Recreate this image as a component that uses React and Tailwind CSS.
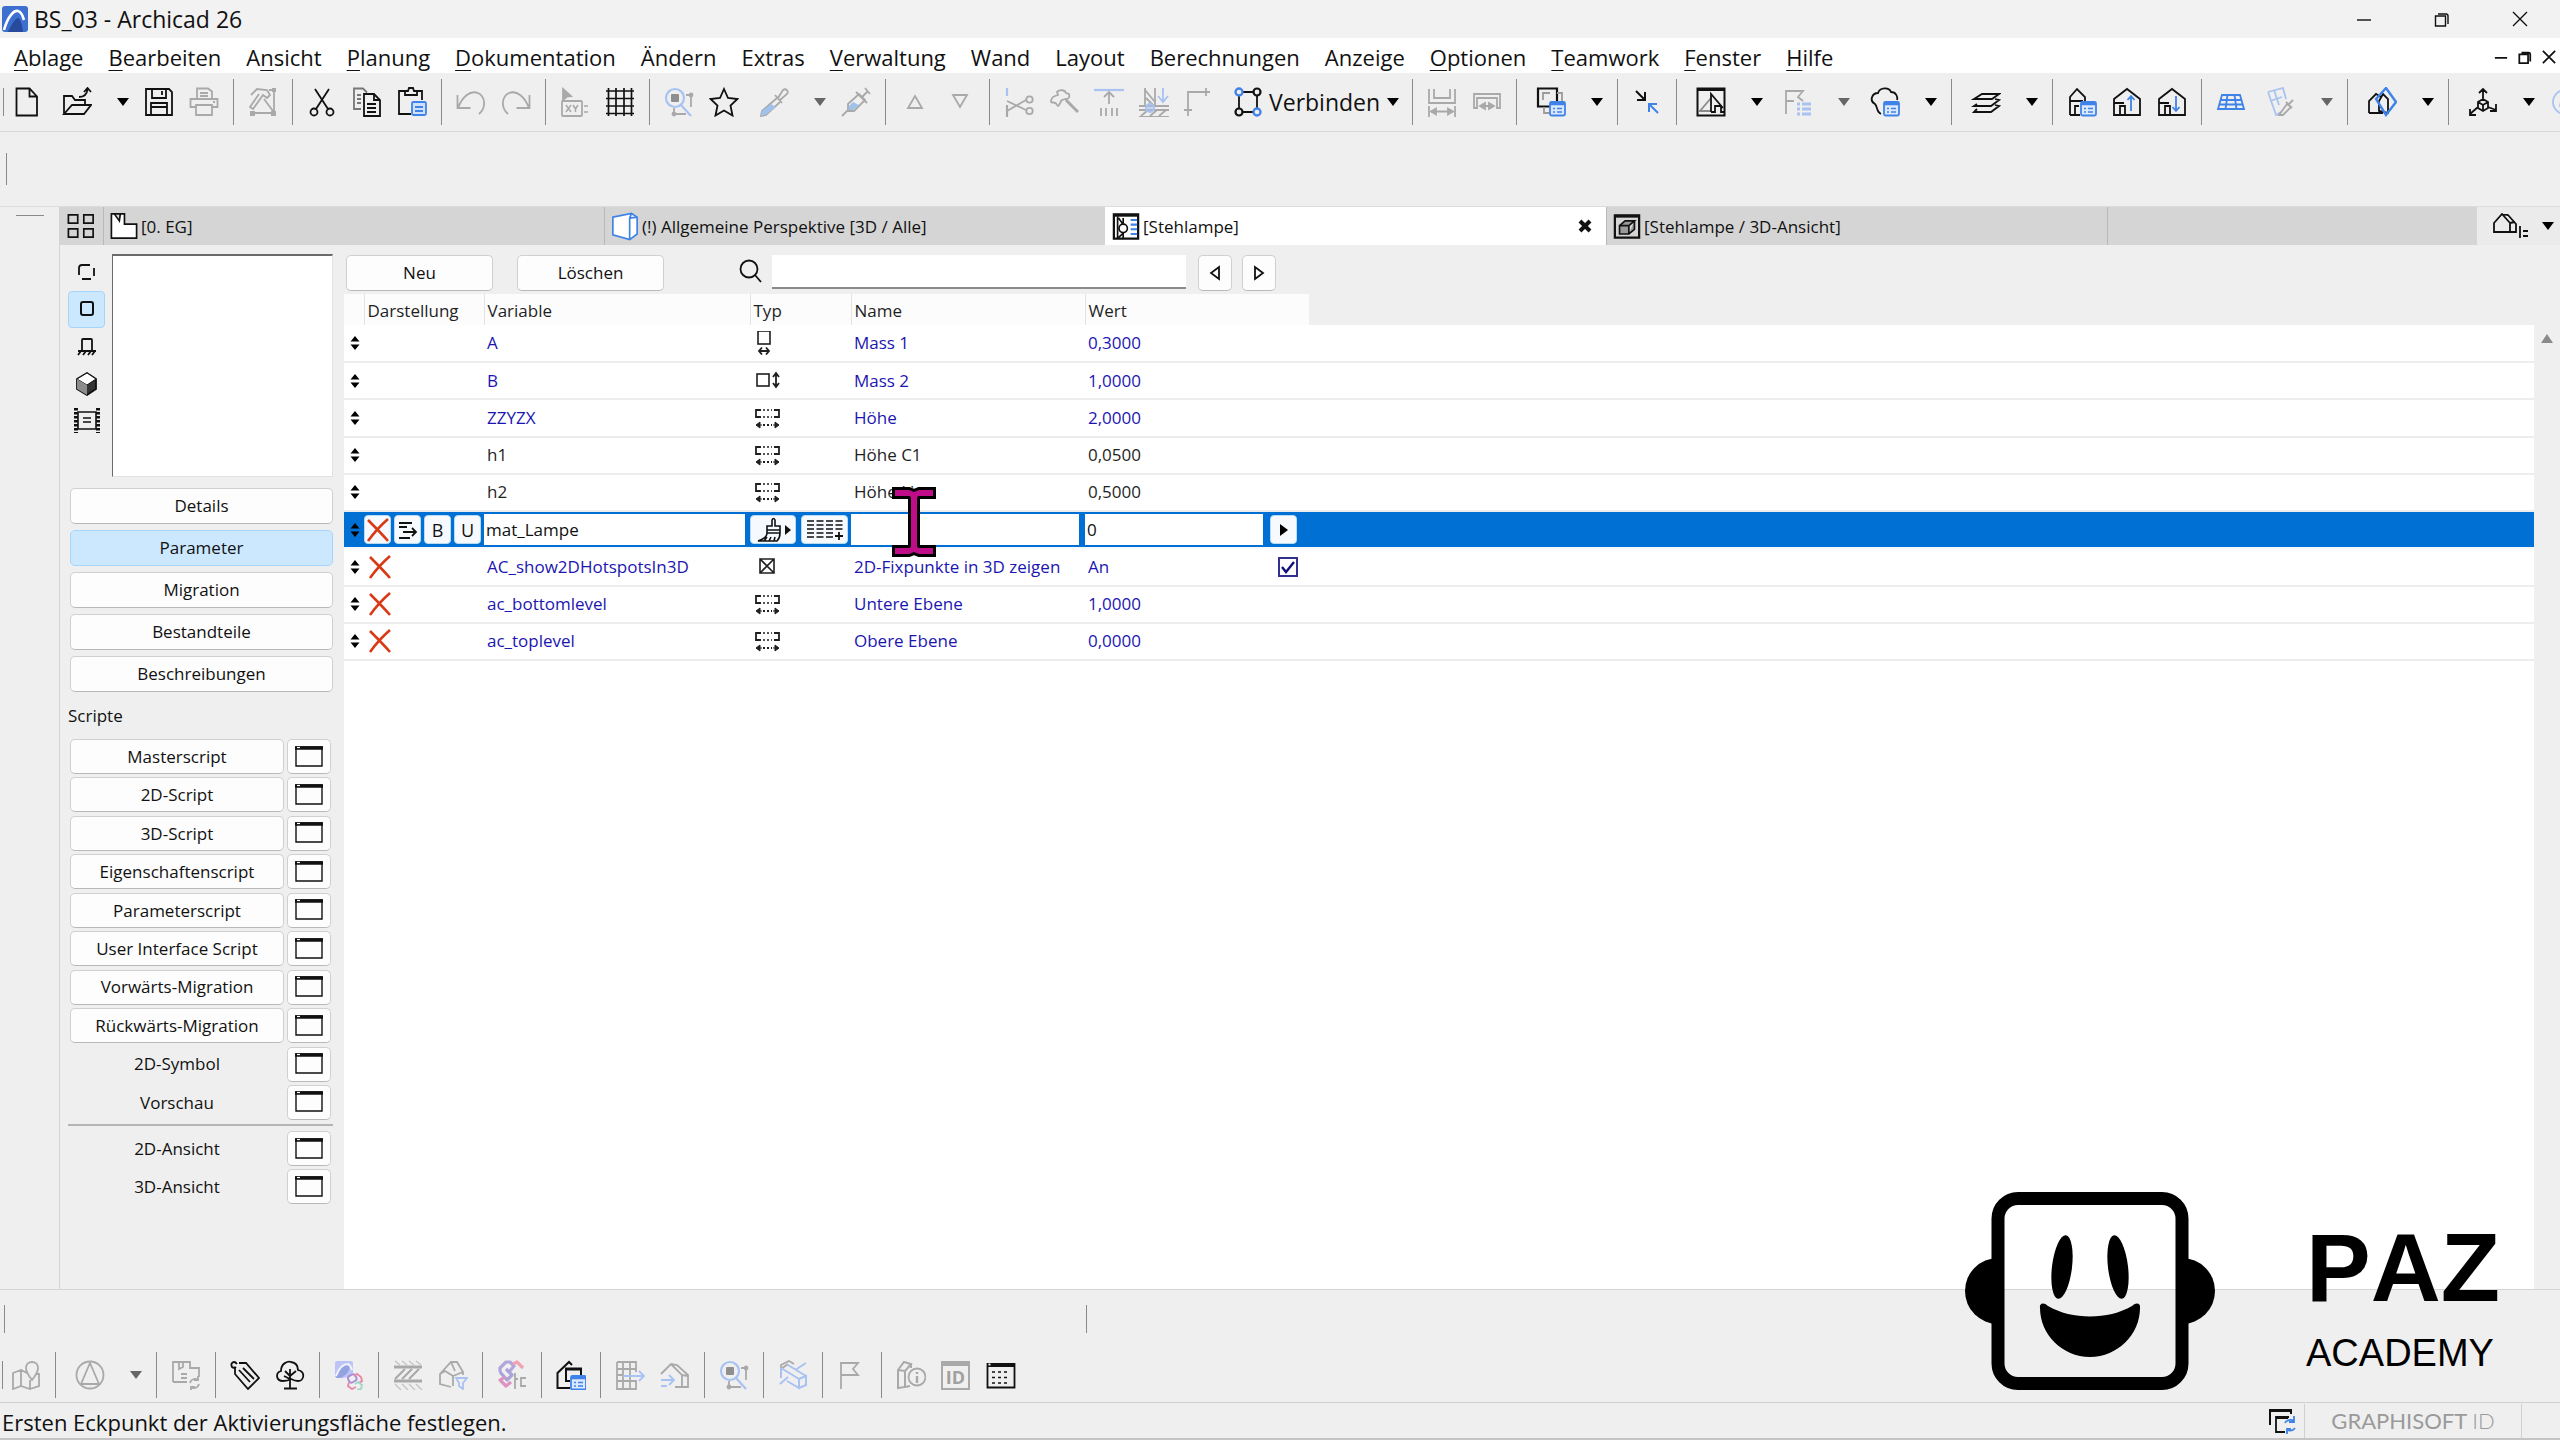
import { clsx } from 'clsx'

const GRAY = '#a9a9a9'
const BLUE = '#3f83e8'
const PALE = '#a8c2f2'

// All toolbar drawings share a 30 x 30 box
const Icon = ({ children, className = 'size-[30px]', box = '0 0 30 30' }) => (
  <svg viewBox={box} className={clsx('shrink-0', className)} fill='none' stroke='currentColor' strokeWidth='1.8' aria-hidden='true'>
    {children}
  </svg>
)

const Palette = ({ x = 14, y = 15 }) => (
  <g stroke={BLUE}>
    <rect x={x} y={y} width='15' height='13.500' rx='1.5' fill='#dbe8fd' />
    <path d={`M${x} ${y + 2}h15`} strokeWidth='2.500' />
    <path d={`M${x + 3} ${y + 6.5}h2M${x + 7} ${y + 6.5}h5M${x + 3} ${y + 10}h2M${x + 7} ${y + 10}h5`} strokeWidth='1.5' />
  </g>
)

const icons = {
  file: <path d='M4.500 1.500h13l7.500 8v19H4.500zM17.500 1.500v8H25' />,
  open: <path d='M2 27V9h8l3 4h10v5M2 27l8-9h19l-7 9zM17 10c5 0 8-2 8.500-8M22 5l3.500-4L29 5' />,
  save: <path d='M2 2h23l3 3v23H2zM8 2v9h14V2M18 4v4M7 28V16h16v12M7 20h16' />,
  print: <g stroke={GRAY}><path d='M8 12V1.500h11l4 3V12M11 6h8M11 9h8M7 20H1.500v-8h27v8H23' /><path d='M7 18h16v10H7z' /><path d='M24 15h2' /></g>,
  settings: <g stroke={GRAY}><path d='M3 8l6-6 10 1 3 5-3 3-4-3L5 22l-3-2L11 7M16 12l9 12M21 3h5v23H5' /><path d='M2 24h5v5H2zM23 24h5v5h-5zM24 1h4v4h-4z' fill={GRAY} stroke='none' /></g>,
  cut: <g><path d='M8 2l13 20M22 2L9 22' /><circle cx='7' cy='25' r='3.500' /><circle cx='23' cy='25' r='3.500' /></g>,
  copy: <g><path d='M9 22H2V1.500h9l4 4M5 8h4M5 12h4M5 16h4' stroke='#777' /><path d='M12 7h10l6 6v16H12zM22 7v6h6M15 17h9M15 21h9M15 25h9' /></g>,
  paste: <g><path d='M14 27H2V4h7M19 4h6v9M8 8h12V4h-3l-1-3h-4l-1 3H8z' /><rect x='15' y='15' width='14' height='13' rx='1.500' stroke={BLUE} fill='#cfe0fb' /><path d='M18 20h8M18 24h8' stroke={BLUE} /></g>,
  undo: <path d='M1.500 8v13h13M2 21C6 10 14 3 22 6c8 4 8 15 1 21' stroke={GRAY} />,
  redo: <path d='M28.500 8v13h-13M28 21C24 10 16 3 8 6 0 10 0 21 7 27' stroke={GRAY} />,
  xy: <g stroke={GRAY}><path d='M3 2l8 7-4 .5L3 13z' fill={GRAY} /><rect x='2' y='14' width='20' height='15' rx='1' /><path d='M6 18l5 7M11 18l-5 7M13 18l2.500 4 2.500-4M15.500 22v3M24 19h4M24 25h4' strokeWidth='1.500' /></g>,
  grid: <path d='M3.500 1v28M11 1v28M19 1v28M26.500 1v28M1 4h28M1 11.500h28M1 19h28M1 26.500h28' strokeWidth='1.700' />,
  find: <g><circle cx='11' cy='11' r='9' stroke={PALE} strokeWidth='2.200' /><path d='M17 18l10 11' stroke={PALE} strokeWidth='2.200' /><rect x='7' y='7' width='8' height='8' rx='1' fill='#8f8f8f' stroke='none' /><path d='M22 8h5v12M10 21v6h12' stroke={GRAY} /><circle cx='27' cy='8' r='1.500' fill={GRAY} stroke={GRAY} /><circle cx='10' cy='27' r='1.500' fill={GRAY} stroke={GRAY} /></g>,
  star: <path d='M15 2l4 9 9.500 1-7 6.500 2 10L15 23.500 6.500 28.500l2-10-7-6.500 9.500-1z' />,
  pipette: <g><path d='M18 11L3 24l-1 5 5-1 14-13' stroke={GRAY} /><path d='M12 17l5 3L6 28l-4 1 1-5z' fill='#9fc1ec' stroke='none' /><path d='M16 8l7 8M19 11l5-8c3-2 6 1 4 4l-7 6' stroke={GRAY} /></g>,
  syringe: <g><path d='M1 29l6-6M7 17l11-10 6 6-11 11H7z' stroke={GRAY} /><path d='M8 19l4-4 6 3-6 5H8z' fill='#9fc1ec' stroke='none' /><path d='M15 5l11 11M21 10l6-6M24 1l5 6' stroke={GRAY} /></g>,
  up: <path d='M15 9l7 12H8z' stroke={GRAY} />,
  down: <path d='M15 20L8 8h14z' stroke={GRAY} />,
  split: <g><path d='M3 1v8' stroke={PALE} strokeWidth='2.200' /><path d='M3 18v12' stroke={GRAY} strokeWidth='2.200' /><path d='M3 14l19 9M3 24l19-11' stroke={GRAY} /><circle cx='25.500' cy='12.500' r='3.200' stroke={GRAY} /><circle cx='25.500' cy='24' r='3.200' stroke={GRAY} /></g>,
  axe: <g stroke={GRAY}><path d='M2 15c0-3 1-5 4-6l3-1-1-3c3-3 8-2 9 1l3 1c1 3 0 5-3 5l-4 1c-2 2-2 5-4 6-2-1-1-3-3-3-1-1-3 0-4-1z' /><path d='M17 13l12 12' strokeWidth='3' /></g>,
  raise: <g><path d='M0 3h30' stroke={PALE} strokeWidth='2.200' /><path d='M15 17V6M10 10l5-5 5 5M7 21v8M12 21v8M18 21v8M23 21v8' stroke={GRAY} /></g>,
  trim: <g><path d='M6 1v19M16 1v19M6 3l10 12M7 11l9 9' stroke={GRAY} /><path d='M24 1v13M19 9l5 6 5-6' stroke={PALE} /><path d='M0 19h30M0 23h30M0 30h30M2 29l7-6M11 29l7-6M20 29l7-6' stroke={GRAY} /><circle cx='11' cy='21' r='4' fill={PALE} fillOpacity='.6' stroke={PALE} /></g>,
  corner: <g stroke={GRAY}><path d='M4 29V5h22M0 23h8M22 1v8' /></g>,
  connect: <g><path d='M9 5h12M6 9v12M24 9v12M9 25h12' /><circle cx='6' cy='5' r='3.500' stroke={BLUE} strokeWidth='2.300' /><circle cx='24' cy='5' r='3.500' strokeWidth='2.200' /><circle cx='6' cy='25' r='3.500' strokeWidth='2.200' /><circle cx='24' cy='25' r='3.500' stroke={BLUE} strokeWidth='2.300' /></g>,
  widthIn: <g stroke={GRAY}><path d='M2 2v14h26V2M7 2v9h16V2M2 19v11M28 19v11M4 24.500h22' /><path d='M4 24.500l5-3v6zM26 24.500l-5-3v6z' fill={GRAY} /></g>,
  widthOut: <g stroke={GRAY}><path d='M2 21V7h26v14h-3V11H5v10zM9 19h12' /><path d='M8 19l5-3v6zM22 19l-5-3v6z' fill={GRAY} /></g>,
  windows: <g><path d='M2 1.500h19v18H2z' strokeWidth='2.200' /><path d='M7 13V6h7M21 6h5v9M8 20v6h6' stroke='#9a9a9a' /><Palette /></g>,
  shrink: <g strokeWidth='2'><path d='M4 4l9 9M13 5v8H5' /><path d='M26 26l-9-9M17 25v-8h8' stroke={BLUE} /></g>,
  view: <g><path d='M1.500 1.500h27v27h-27z' strokeWidth='2' /><path d='M1.500 2.500h27' strokeWidth='3' /><path d='M3 24h11M4 24L15 11' stroke='#8a8a8a' /><path d='M15 25V7l12 14M15 25h4v-6h6v6h3' /></g>,
  flagList: <g><path d='M3 27V4h17l-5 6 5 4M3 14h8' stroke={GRAY} /><path d='M14 17h3M19 17h9M14 22h3M19 22h9M14 27h3M19 27h9' stroke={PALE} strokeWidth='2.800' /></g>,
  cloud: <g><path d='M11 27C6 25 8 20 5 17c-6-3-3-11 3-11C10 0 19 0 21 5c5 0 7 5 6 8' /><Palette /></g>,
  layers: <g><path d='M3 12l8-5h17l-7 5zM6 17l-3 2h17l8-6-4-1M6 22l-3 3h17l8-6-4-1' /></g>,
  houseList: <g><path d='M3 28V10l7-8 8 8v4M3 14h13M3 28h10M8 28v-9h4' /><Palette /></g>,
  houseUp: <g><path d='M2 12L15 2l13 10v16H2zM2 16h10M8 28V19h5v9' /><path d='M19 24V9M15.500 13L19 9l3.500 4' stroke={BLUE} /></g>,
  houseDown: <g><path d='M2 12L15 2l13 10v16H2zM2 16h10M8 28V19h5v9' /><path d='M19 9v15M15.500 20l3.500 4 3.500-4' stroke={BLUE} /></g>,
  plane: <path d='M6 8h18l4 14H2zM4.500 13h21M3.500 17.500h23M11.500 8l-2 14M18.500 8l2 14' stroke={BLUE} />,
  surface: <g><path d='M2 5l15-4 3 11M2 5l8 23 5-3M4 14l12-4M8 3l5 15' stroke={PALE} /><path d='M13 28l8-11 4 3-8 8zM20 15l6 6M23 17l4-4' stroke={GRAY} /></g>,
  section: <g><path d='M2 26V14l7-7 5 3M2 26h14M12 14v10l9 2V12l-5-5z' /><path d='M9 12L19 1l10 14-10 13z' stroke={BLUE} strokeWidth='2.400' /></g>,
  orbit: <g><path d='M15 12V2M11 6l4-4 4 4M10 20l-8 7M2 22v6h6M20 20l8 3M28 17v7h-6M10 15l5-3 5 3v6l-5 3-5-3zM10 15l5 3 5-3M15 18v6' /></g>,
  orbitMore: <g stroke={PALE}><circle cx='15' cy='15' r='12' /><path d='M10 20c0-8 6-10 12-8' /></g>,

  map: <path d='M2 13l8-3v16l-8 3zM10 10l6 3M10 26l9 3V20M19 29l9-3V14h-3M21 20c-4-5-6-8-6-12 0-8 12-8 12 0 0 4-2 7-6 12zM21 9v.1' stroke={GRAY} />,
  north: <g stroke={GRAY}><circle cx='15' cy='15' r='13.500' /><path d='M15 3l9 21H6z' /></g>,
  zoneSync: <path d='M2 22V2h17v6h9v9M2 22h14M8 2v7l4-2V2M10 14h6M10 18h6M19 23c1-4 5-5 8-3M27 16v4h-4M28 24c-1 4-5 5-8 3M20 31v-4h4' stroke={GRAY} />,
  tag: <path d='M7 4c-3-4-7-1-5 3 1 1 3 1 4 0M9 3h7l13 15-11 11L5 14V8M9 10l11 12M13 8l11 11' />,
  tree: <path d='M8 21C1 21 0 13 6 11 6 3 13 1 16 2c6 1 7 5 7 8 8 2 6 11 0 11-3 0-5-1-7-2-3 2-5 2-8 2zM15 28V9M15 16l-5-5M15 16l6-5M15 19l-6-3M9 28.500h13' />,
  convert: <g><path d='M1 3q0-2 2-2h14q2 0 2 2v10q-9 8-18 4z' fill='#bcc4f6' stroke='none' /><path d='M2 18C5 8 10 3 14 3c3 4 2 8-4 13-3 2-6 2-8 2z' fill='#93a3e2' stroke='none' /><path d='M2 16C5 8 9 4 14 4c2 1 3 3 4 6' stroke='#f1f2fc' strokeWidth='2' /><g strokeWidth='1.900'><rect x='14' y='15' width='8' height='7' rx='2.500' transform='rotate(-30 18 18)' stroke='#a78fd6' /><path d='M20 16l3-2 4 3 1 4-3 2' stroke='#e889ab' /><path d='M15 22l-1 4 4 3 4-2' stroke='#e889ab' /><path d='M21 24l3-2 4 3-1 4-4 1' stroke='#a5d5c9' /></g></g>,
  hatch: <g stroke={GRAY}><path d='M1 7h28M1 21h28' strokeWidth='3' /><path d='M2 19L12 9M9 19L19 9M16 19L26 9' strokeWidth='2.200' /><path d='M2 1l5 4M9 1l5 4M16 1l5 4M23 1l5 4M2 24l6 6M9 24l6 6M16 24l6 6M23 24l6 6' stroke='#c4c4c4' strokeWidth='1.400' /></g>,
  houseFilter: <g><path d='M13 27L2 24V14L13 2h6l6 10v3M2 14l5-3 8 5v10M15 16l10-4M13 2l4 9' stroke={GRAY} /><path d='M18 18h11l-4 5v6l-4-3v-3z' stroke={PALE} /></g>,
  issue: <g strokeWidth='3.200' strokeLinejoin='round'><path d='M3 12V8l6-6h4l4 4-5 6' stroke='#b3a5dc' /><path d='M16 4l4-2 6 6' stroke='#f0a3b4' /><path d='M3 12l7 8 5-5-6-6' stroke='#a9a3d8' /><path d='M8 17l-5 3 6 6 5-4' stroke='#dd93c0' /><path d='M18 13v16M18 19h3M24 17v10M24 18h5M24 26h5' stroke={GRAY} strokeWidth='1.800' /></g>,
  homePalette: <g><path d='M14 28H1.500V13L13 2l3 3' strokeWidth='2' /><path d='M14 21h-4V9h15v6' strokeWidth='2' /><path d='M9 9h17' strokeWidth='3' /><Palette x={15} y={16} /></g>,
  gridMove: <g><path d='M2 2h19v10M21 20v9H2V2M8 2v27M15 2v27M2 9h19M2 21h19M2 15h6' stroke={GRAY} /><path d='M8 16h21M24 11l5 5-5 5' stroke={PALE} /></g>,
  houseMove: <g><path d='M1 14L11 4l11 11v11M11 4l6 1 11 10v12H15M22 15l6 1' stroke={GRAY} /><path d='M1 20h12M9 15l5 5-5 5M1 26h6' stroke={PALE} /></g>,
  beam: <g><path d='M3 8V5l8-4 5 3M3 9l7-5' stroke={GRAY} /><path d='M3 8l18 11v9L9 21M3 8v10M21 19l7-3v9l-7 3M10 5l18 11M2 24l8-7M17 10L28 3' stroke={PALE} strokeWidth='2' /></g>,
  flag: <path d='M4 29V3h17l-5 6 5 6H4' stroke={GRAY} />,
  elementInfo: <g stroke={GRAY}><path d='M2 10l6-8 7 2-6 7v16l-7 1zM9 11l-7-1M15 4v4M9 27l5-1' strokeWidth='2' /><circle cx='21' cy='17' r='8.500' /><path d='M21 12v2M21 16v7' strokeWidth='2.400' /></g>,
  listWindow: <g><path d='M1.500 4v23.500h27V4z' /><path d='M1 5h28' strokeWidth='4' /><path d='M2.500 4.500h2' stroke='#fff' /><path d='M6 12h3M12 12h3M18 12h3M6 17.500h3M12 17.500h3M18 17.500h3M6 23h3M12 23h3M18 23h3' strokeWidth='1.600' /></g>,
}

const Caret = ({ faded }) => (
  <svg viewBox='0 0 12 8' className={clsx('w-3 h-2', faded ? 'fill-[#666]' : 'fill-black')} aria-hidden='true'>
    <path d='M0 0h12L6 8z' />
  </svg>
)

const Separator = () => (
  <div className='w-3.5 shrink-0 flex justify-center'>
    <div className='w-px h-[46px] bg-[#8a8a8a]' />
  </div>
)

const Tool = ({ name, menu, faded, children }) => {
  if (menu) {
    return (
      <div className='w-[87px] shrink-0 flex items-center'>
        <button aria-label={name} className='w-[55px] flex justify-center'>
          <Icon>{icons[name]}</Icon>
        </button>
        <button aria-label={`${name} menu`} className='w-8 h-[30px] pr-[7px] flex items-center justify-end'>
          <Caret faded={faded} />
        </button>
      </div>
    )
  }
  return (
    <button aria-label={name} className='w-[45px] shrink-0 flex justify-center'>
      {children || <Icon>{icons[name]}</Icon>}
    </button>
  )
}

// '|' is a divider, a ':v' suffix adds a drop-down, ':f' a faded one
const Toolbar = ({ items }) =>
  items.map((item, idx) => {
    if (item === '|') return <Separator key={idx} />
    if (item === 'connect') {
      return (
        <button key={idx} className='w-[184px] shrink-0 pl-3 flex items-center'>
          <Icon className='size-[30px]'>{icons.connect}</Icon>
          <span className='pl-1.5 grow text-left text-[23px] leading-7'>Verbinden</span>
          <span className='pr-1.5'><Caret /></span>
        </button>
      )
    }
    if (item === 'id') {
      return (
        <Tool key={idx} name='id'>
          <span className='size-[29px] border-2 border-t-[5px] border-[#a9a9a9] text-[#a0a0a0] text-[18px] leading-[22px] font-bold'>ID</span>
        </Tool>
      )
    }
    const [name, mode] = item.split(':')
    return <Tool key={idx} name={name} menu={Boolean(mode)} faded={mode === 'f'} />
  })

const topTools = [
  'file', 'open:v', 'save', 'print', '|', 'settings', '|', 'cut', 'copy', 'paste', '|', 'undo', 'redo', '|', 'xy', 'grid', '|',
  'find', 'star', 'pipette:f', 'syringe', '|', 'up', 'down', '|', 'split', 'axe', 'raise', 'trim', 'corner', 'connect', '|',
  'widthIn', 'widthOut', '|', 'windows:v', '|', 'shrink', '|', 'view:v', 'flagList:f', 'cloud:v', '|', 'layers:v', '|',
  'houseList', 'houseUp', 'houseDown', '|', 'plane', 'surface:f', '|', 'section:v', '|', 'orbit:v', 'orbitMore',
]

const bottomTools = [
  'map', '|', 'north:f', '|', 'zoneSync', '|', 'tag', 'tree', '|', 'convert', '|', 'hatch', 'houseFilter', '|', 'issue', '|',
  'homePalette', '|', 'gridMove', 'houseMove', '|', 'find', '|', 'beam', '|', 'flag', '|', 'elementInfo', 'id', 'listWindow',
]

// [text before, underlined letter, rest]
const menus = [
  ['', 'A', 'blage'], ['', 'B', 'earbeiten'], ['A', 'n', 'sicht'], ['', 'P', 'lanung'], ['', 'D', 'okumentation'],
  ['Ändern'], ['Extras'], ['', 'V', 'erwaltung'], ['Wand'], ['Layout'], ['Berechnungen'], ['Anzeige'],
  ['', 'O', 'ptionen'], ['', 'T', 'eamwork'], ['', 'F', 'enster'], ['', 'H', 'ilfe'],
]

const WindowControls = ({ small }) => (
  <div className={clsx('flex items-center ml-auto', small ? 'gap-2.5 pr-1' : 'gap-[62px] pr-8')}>
    {['M1 9h14', 'M1.500 5h10v10h-10zM4 3h8q2 0 2 2v8', 'M1 1l14 14M15 1L1 15'].map((d, idx) => (
      <button key={d} aria-label={['Minimieren', 'Wiederherstellen', 'Schliessen'][idx]}>
        <Icon box='0 0 16 16' className={small ? 'size-3.5' : 'size-4'}>
          <path d={d} strokeWidth={small ? 2 : 1.4} />
        </Icon>
      </button>
    ))}
  </div>
)

const tabs = [
  {
    label: '[0. EG]',
    icon: <path d='M1.500 1.500h14v11h13v15h-27z M5 2l5 7 1-7' fill='#fff' />,
  },
  {
    label: '(!) Allgemeine Perspektive [3D / Alle]',
    icon: <path d='M2 5l20-4 6 4v18l-8 6-18-5zM20 6v23M22 1l-2 5M20 6l8-1' fill='#fff' stroke={BLUE} />,
  },
  {
    label: '[Stehlampe]',
    active: true,
    icon: <g><path d='M2 2h26v26H2z' strokeWidth='2.400' /><path d='M2 3h26' strokeWidth='3' /><path d='M6 4v24M12 6v7M12 22v6M7 6l5 7M7 27l5-5' /><circle cx='12' cy='17' r='4.500' /><path d='M20 8h7M20 13h7M20 18h7M20 23h7' stroke={BLUE} strokeWidth='2.200' /></g>,
  },
  {
    label: '[Stehlampe / 3D-Ansicht]',
    icon: <g><path d='M2 3h26v24H2z' strokeWidth='2.400' /><path d='M2 4h26' strokeWidth='3' /><path d='M7 14h10v9H7zM7 14l6-5h10l-6 5M23 9v9l-6 5' fill='#9a9a9a' /></g>,
  },
]

const raised = 'rounded-[5px] border border-[#d0d0d0] border-b-[#b9b9b9] bg-[#fdfdfd]'

const sections = ['Details', 'Parameter', 'Migration', 'Bestandteile', 'Beschreibungen']

const scripts = [
  { name: 'Masterscript' }, { name: '2D-Script' }, { name: '3D-Script' }, { name: 'Eigenschaftenscript' },
  { name: 'Parameterscript' }, { name: 'User Interface Script' }, { name: 'Vorwärts-Migration' },
  { name: 'Rückwärts-Migration' }, { name: '2D-Symbol', plain: true }, { name: 'Vorschau', plain: true },
]

const views = [{ name: '2D-Ansicht', plain: true }, { name: '3D-Ansicht', plain: true }]

const previewModes = [
  { name: '2D-Symbol', icon: <path d='M5 15V8q0-3 3-3h8M20 8v8M8 19h9' strokeWidth='1.800' /> },
  { name: 'Vollansicht', icon: <rect x='7' y='5' width='12' height='13' rx='2' strokeWidth='2' />, selected: true },
  { name: 'Ansicht', icon: <path d='M8 16V6q0-1 1-1h8q1 0 1 1v10M4 17h18M7 17l-3 4M12 17l-3 4M17 17l-3 4M21 17l-3 4' strokeWidth='1.800' /> },
  { name: '3D', icon: <g><path d='M3 8l10-6 9 6v10l-9 6-10-6z' fill='#333' /><path d='M3 8l10-6 9 6-9 6z' fill='#fff' strokeWidth='1' /><path d='M3 8l10 6v10L3 18z' fill='#8c8c8c' stroke='none' /></g> },
  { name: 'Vorschaubild', icon: <g><path d='M2 0v25M24 0v25' strokeWidth='4' strokeDasharray='2.500 1.500' /><path d='M4 4h18v17H4zM9 10h8M9 14h8' strokeWidth='1.600' /></g> },
]

const ScriptRow = ({ name, plain }) => (
  <div className='flex gap-[3px]'>
    {plain ? (
      <div className='w-[214px] h-[35px] flex items-center justify-center'>{name}</div>
    ) : (
      <button className={clsx('w-[214px] h-[35px]', raised)}>{name}</button>
    )}
    <button aria-label={`${name} Fenster`} className={clsx('w-11 h-[35px] flex items-center justify-center', raised)}>
      <Icon box='0 0 28 22' className='w-7 h-[22px]'>
        <path d='M1 1h26v19H1z' strokeWidth='1.400' />
        <path d='M0 2h28' strokeWidth='3.500' />
        <path d='M2 1.500h3' stroke='#fff' strokeWidth='1.200' />
      </Icon>
    </button>
  </div>
)

const SidePanel = () => (
  <aside className='w-[285px] shrink-0 border-l border-[#d4d4d4] pl-2 pr-[11px] pt-[9px] text-[17px]'>
    <div className='flex gap-[7px]'>
      <div className='flex flex-col'>
        {previewModes.map(({ name, icon, selected }) => (
          <button
            key={name}
            aria-label={name}
            className={clsx('w-[37px] h-[37px] flex items-center justify-center rounded border', selected ? 'bg-[#cce8ff] border-[#a5d5fa]' : 'border-transparent')}
          >
            <Icon box='0 0 26 25' className='w-[26px] h-[25px]'>{icon}</Icon>
          </button>
        ))}
      </div>
      <div className='grow h-[223px] bg-white border border-t-2 border-[#6b6b6b] border-r-[#e2e2e2] border-b-[#e2e2e2]' />
    </div>
    <div className='mt-[11px] pl-0.5 flex flex-col gap-1.5'>
      {sections.map(name => (
        <button
          key={name}
          className={clsx('h-9', name === 'Parameter' ? 'rounded-[5px] border border-[#a5d5fa] bg-[#cce8ff]' : raised)}
        >
          {name}
        </button>
      ))}
    </div>
    <h2 className='h-[47px] flex items-center'>Scripte</h2>
    <div className='pl-0.5 min-h-[381px] flex flex-col justify-between'>
      {scripts.map(item => <ScriptRow key={item.name} {...item} />)}
    </div>
    <div className='mt-1 mb-[5px] h-0.5 bg-[#b5b5b5]' />
    <div className='pl-0.5 flex flex-col gap-[3px]'>
      {views.map(item => <ScriptRow key={item.name} {...item} />)}
    </div>
  </aside>
)

const typeIcons = {
  width: <g><rect x='4' y='0' width='12' height='13' strokeWidth='1.600' /><path d='M5 20h10M8 16.500L5 20l3 3.500M12 16.500l3 3.500-3 3.500' strokeWidth='1.800' /></g>,
  depth: <g><rect x='3' y='5' width='12' height='12' strokeWidth='1.600' /><path d='M22 5v12M19 8l3-4 3 4M19 14l3 4 3-4' strokeWidth='1.800' /></g>,
  length: <g><path d='M7 4H2v7h5M20 4h5v7h-5' strokeWidth='1.800' /><path d='M9 4h9M9 11h9' strokeDasharray='2 2' strokeWidth='1.600' /><path d='M9 19h9' strokeDasharray='2 2' /><path d='M2 19l4-3v6zM25 19l-4-3v6zM5 19h3M19 19h3' fill='currentColor' strokeWidth='1' /></g>,
  bool: <path d='M6 4h14v14H6zM6 4l14 14M20 4L6 18' strokeWidth='1.600' />,
}

const rows = [
  { variable: 'A', type: 'width', name: 'Mass 1', value: '0,3000', fixed: true },
  { variable: 'B', type: 'depth', name: 'Mass 2', value: '1,0000', fixed: true },
  { variable: 'ZZYZX', type: 'length', name: 'Höhe', value: '2,0000', fixed: true },
  { variable: 'h1', type: 'length', name: 'Höhe C1', value: '0,0500' },
  { variable: 'h2', type: 'length', name: 'Höhe Line', value: '0,5000' },
  { variable: 'mat_Lampe', editing: true },
  { variable: 'AC_show2DHotspotsIn3D', type: 'bool', name: '2D-Fixpunkte in 3D zeigen', value: 'An', fixed: true, hidden: true },
  { variable: 'ac_bottomlevel', type: 'length', name: 'Untere Ebene', value: '1,0000', fixed: true, hidden: true },
  { variable: 'ac_toplevel', type: 'length', name: 'Obere Ebene', value: '0,0000', fixed: true, hidden: true },
]

const SortHandle = () => (
  <svg viewBox='0 0 10 14' className='ml-1.5 w-2.5 h-3.5 fill-black' aria-hidden='true'>
    <path d='M5 0l4.500 5.500h-9zM5 14l4.500-5.500h-9z' />
  </svg>
)

const RedCross = () => (
  <Icon box='0 0 24 24' className='size-6'>
    <path d='M2 2c6 6 14 14 20 21M22 1C14 8 7 16 2 23' stroke='#d93a16' strokeWidth='2.600' />
  </Icon>
)

const cellButton = 'h-[29px] shrink-0 flex items-center justify-center rounded-sm border border-[#b8dcf7] bg-[#f6fafe]'
const cellInput = 'h-[31px] pl-0.5 bg-white outline-none'

const EditingRow = ({ variable }) => (
  <tr className='h-[37px] bg-[#0070d4] border-b-2 border-[#f4f9fe]'>
    <td><SortHandle /></td>
    <td>
      <div className='flex gap-[3px]'>
        <button aria-label='Ausblenden' className={clsx('w-[27px]', cellButton)}><RedCross /></button>
        <button aria-label='Einrücken' className={clsx('w-[27px]', cellButton)}>
          <Icon box='0 0 20 20' className='size-5'><path d='M1 3h13M1 7h8M5 12h13M14 8l4 4-4 4M1 18h11' /></Icon>
        </button>
        <button className={clsx('w-[27px] text-[18px]', cellButton)}>B</button>
        <button className={clsx('w-[27px] text-[18px]', cellButton)}>U</button>
      </div>
    </td>
    <td><input aria-label='Variable' defaultValue={variable} className={clsx('block w-[261px]', cellInput)} /></td>
    <td>
      <div className='flex gap-[5px]'>
        <button aria-label='Materialtyp' className={clsx('w-[46px]', cellButton)}>
          <Icon box='0 0 38 26' className='w-[38px] h-[26px]'>
            <path d='M18 9V3q1.500-3 3 0v6h5v7H13V9zM13 13h13M13 16c0 4-3 6-9 8h19c2-2 3-5 3-8M10 24l3-4M15 24l2-4M20 24l1-4' strokeWidth='1.600' />
            <path d='M31 8l6 5-6 5z' fill='currentColor' stroke='none' />
          </Icon>
        </button>
        <button aria-label='Array' className={clsx('w-[47px]', cellButton)}>
          <Icon box='0 0 38 24' className='w-[38px] h-6'>
            <path d='M1 3h36M1 7h36M1 11h36M1 15h28M1 19h26' strokeDasharray='7 2.500' strokeWidth='1.500' />
            <path d='M29 18h8M33 14v8' />
          </Icon>
        </button>
      </div>
    </td>
    <td><input aria-label='Name' defaultValue='' className={clsx('block w-[228px]', cellInput)} /></td>
    <td>
      <div className='flex items-center justify-between pr-3'>
        <input aria-label='Wert' defaultValue='0' className={clsx('w-[178px]', cellInput)} />
        <button aria-label='Auswahl' className={clsx('w-[27px]', cellButton)}>
          <svg viewBox='0 0 8 12' className='w-2 h-3 fill-black' aria-hidden='true'><path d='M0 0l8 6-8 6z' /></svg>
        </button>
      </div>
    </td>
    <td />
  </tr>
)

const ParameterRow = ({ variable, type, name, value, fixed, hidden }) => (
  <tr className={clsx('h-[37px] bg-white border-b-2 border-[#ededed]', fixed ? 'text-[#1c16b0]' : 'text-[#1f1f1f]')}>
    <td><SortHandle /></td>
    <td className='pl-1'>{hidden && <RedCross />}</td>
    <td className='pl-[3px]'>{variable}</td>
    <td className='pl-1 text-[#1f1f1f]'>
      <Icon box='0 0 26 24' className='w-[26px] h-6'>{typeIcons[type]}</Icon>
    </td>
    <td className='pl-[3px]'>{name}</td>
    <td className='pl-[3px]'>
      {type === 'bool' ? (
        <label className='flex items-center justify-between pr-[11px]'>
          {value}
          <span className='grid place-items-center'>
            <input type='checkbox' defaultChecked className='appearance-none size-5 border-2 border-[#33318f] bg-white col-start-1 row-start-1' />
            <Icon box='0 0 20 20' className='size-5 col-start-1 row-start-1 text-[#12107a] pointer-events-none'>
              <path d='M4 10l4 5 8-10' strokeWidth='2.400' />
            </Icon>
          </span>
        </label>
      ) : value}
    </td>
    <td />
  </tr>
)

const ParameterTable = () => (
  <table className='w-full h-[367px] table-fixed border-collapse text-[17px] leading-5'>
    <colgroup>
      <col className='w-5' />
      <col className='w-[120px]' />
      <col className='w-[266px]' />
      <col className='w-[101px]' />
      <col className='w-[234px]' />
      <col className='w-[224px]' />
      <col />
    </colgroup>
    <thead>
      <tr className='h-[31px] text-left text-[#1f1f1f] *:font-normal *:pl-[3px] *:pt-0.5'>
        <th className='bg-[#fcfcfc]' />
        <th className='bg-[#fcfcfc] border-l border-[#e3e3e3]'>Darstellung</th>
        <th className='bg-[#fcfcfc] border-l border-[#e3e3e3]'>Variable</th>
        <th className='bg-[#fcfcfc] border-l border-[#e3e3e3]'>Typ</th>
        <th className='bg-[#fcfcfc] border-l border-[#e3e3e3]'>Name</th>
        <th className='bg-[#fcfcfc] border-l border-[#e3e3e3]'>Wert</th>
        <th className='bg-[#efefef]' />
      </tr>
    </thead>
    <tbody>
      {rows.map(row => row.editing
        ? <EditingRow key={row.variable} {...row} />
        : <ParameterRow key={row.variable} {...row} />)}
    </tbody>
  </table>
)

const EditorPanel = () => (
  <main className='relative grow min-w-0 flex flex-col'>
    <div className='h-[49px] pl-0.5 pt-2.5 flex items-start text-[17px]'>
      <button className={clsx('w-[147px] h-9 mr-6', raised)}>Neu</button>
      <button className={clsx('w-[147px] h-9', raised)}>Löschen</button>
      <label htmlFor='search' aria-label='Suchen' className='ml-[74px] mr-2.5 pt-1'>
        <Icon box='0 0 24 24' className='size-6'>
          <circle cx='11' cy='10' r='8.500' />
          <path d='M17 16l6 7' />
        </Icon>
      </label>
      <input id='search' className='w-[414px] h-[34px] bg-white border-b-2 border-[#8a8a8a] outline-none' />
      <button aria-label='Zurück' className={clsx('ml-3 w-[34px] h-9 flex items-center justify-center', raised)}>
        <Icon box='0 0 12 16' className='w-3 h-4'><path d='M10 2v12L2 8z' /></Icon>
      </button>
      <button aria-label='Weiter' className={clsx('ml-2.5 w-[34px] h-9 flex items-center justify-center', raised)}>
        <Icon box='0 0 12 16' className='w-3 h-4'><path d='M2 2v12l8-6z' /></Icon>
      </button>
    </div>
    <div className='grow flex'>
      <div className='grow min-w-0 bg-white'>
        <ParameterTable />
      </div>
      <div className='w-[26px] shrink-0 pt-10 flex justify-center'>
        <svg viewBox='0 0 12 9' className='w-3 h-[9px] fill-[#8a8a8a]' aria-hidden='true'><path d='M6 0l6 9H0z' /></svg>
      </div>
    </div>
    {/* I-beam pointer */}
    <svg viewBox='0 0 44 72' className='absolute left-[548px] top-[241px] w-11 h-[72px]' aria-hidden='true'>
      <path d='M3 4h14l5 2 5-2h14v6H27q-2 0-2 3v46q0 3 2 3h14v6H27l-5-2-5 2H3v-6h14q2 0 2-3V13q0-3-2-3H3z' fill='#bf0d8a' stroke='#000' strokeWidth='6' paintOrder='stroke' />
    </svg>
  </main>
)

const Brand = () => (
  <div className='absolute right-[60px] bottom-[50px] flex items-start gap-[90px]'>
    <svg viewBox='0 0 252 198' className='w-[252px] h-[198px]' aria-hidden='true'>
      <circle cx='34' cy='99' r='33' />
      <circle cx='218' cy='99' r='33' />
      <rect x='40' y='12' width='172' height='174' rx='14' fill='#fff' />
      <path d='M40 98h172v74q0 14-14 14H54q-14 0-14-14z' fill='#efefef' />
      <path d='M40 97.500h172' stroke='#d4d4d4' />
      <rect x='34' y='6.500' width='184' height='185' rx='20' fill='none' stroke='#000' strokeWidth='13' />
      <ellipse cx='98' cy='75' rx='10' ry='32' transform='rotate(7 98 75)' />
      <ellipse cx='154' cy='75' rx='10' ry='32' transform='rotate(-7 154 75)' />
      <path d='M76 116c-1-5 4-6 8-2 24 14 60 14 84 0 4-4 9-3 8 2 0 26-22 49-50 49s-50-23-50-49z' />
    </svg>
    <div className='pt-[27px] font-["Liberation_Sans",sans-serif] text-black'>
      <div className='text-[97px] leading-none font-bold [font-kerning:none]'>PAZ</div>
      <div className='mt-[18px] text-[38px] leading-none'>ACADEMY</div>
    </div>
  </div>
)

export default function App() {
  return (
    <div className='relative min-h-screen flex flex-col overflow-hidden bg-[#efefef] text-[#111] font-["Open_Sans","Noto_Sans",sans-serif]'>
      <header className='h-[38px] flex items-center bg-[#f2f2f2] pl-0.5'>
        <svg viewBox='0 0 26 26' className='size-[26px] mr-1.5' aria-hidden='true'>
          <rect width='26' height='26' rx='3' fill='#3d6fd0' />
          <path d='M2 24C6 10 12 4 16 5s5 6 6 9' fill='none' stroke='#fff' strokeWidth='2.600' />
          <path d='M6 26c4-9 8-14 10-14s4 6 5 14z' fill='#274a9c' />
        </svg>
        <h1 className='text-[23px] leading-7'>BS_03 - Archicad 26</h1>
        <WindowControls />
      </header>

      <nav className='h-[35px] flex items-center gap-[25px] bg-white pl-3.5 pt-0.5 text-[22px] leading-7'>
        {menus.map(([before, key, after]) => (
          <a key={before + key + after} href='#menu'>
            {before}
            {key && <span className='underline underline-offset-4 decoration-1'>{key}</span>}
            {after}
          </a>
        ))}
        <WindowControls small />
      </nav>

      <div className='h-[59px] flex items-center overflow-hidden border-b border-[#d6d6d6]'>
        <div className='w-1 shrink-0 flex justify-end'><div className='w-px h-7 bg-[#8a8a8a]' /></div>
        <Toolbar items={topTools} />
      </div>
      <div className='h-[75px] pl-1.5 flex items-center border-b border-[#dcdcdc]'>
        <div className='w-px h-8 bg-[#8a8a8a]' />
      </div>

      <div className='grow flex'>
        <div className='w-[59px] shrink-0 pt-2 flex justify-center'>
          <div className='w-7 h-px bg-[#8a8a8a]' />
        </div>
        <div className='grow min-w-0 flex flex-col'>
          <div className='h-[38px] flex bg-[#d5d5d5] text-[17px]'>
            <button aria-label='Übersicht' className='w-11 shrink-0 flex items-center justify-center'>
              <Icon className='size-[28px]'><path d='M1.500 3h10v9h-10zM18 3h10v9H18zM1.500 18h10v9h-10zM18 18h10v9H18z' /></Icon>
            </button>
            {tabs.map(({ label, icon, active }) => (
              <div key={label} className={clsx('w-[501px] shrink-0 flex items-center pl-1.5 pr-3.5 border-l', active ? 'bg-white border-white' : 'border-[#b9b9b9]')}>
                <Icon className='w-7 h-[29px]'>{icon}</Icon>
                <button className='pl-[3px] pt-0.5 grow text-left'>{label}</button>
                {active && (
                  <button aria-label='Tab schliessen'>
                    <Icon box='0 0 14 14' className='size-3.5'><path d='M2 2l10 10M12 2L2 12' strokeWidth='4' /></Icon>
                  </button>
                )}
              </div>
            ))}
            <div className='grow border-l border-[#b9b9b9]' />
            <button aria-label='Ansichtsoptionen' className='w-[83px] shrink-0 pl-4 pr-1.5 flex items-center justify-between bg-[#ebebeb]'>
              <Icon box='0 0 36 26' className='w-9 h-[26px]'>
                <path d='M1 19V10l8-9 8 9v9zM9 1l6 1 8 9v8h-6M17 10l5-1M27 13v12M30 18h5M30 23h5' />
              </Icon>
              <Caret />
            </button>
          </div>
          <div className='grow flex'>
            <SidePanel />
            <EditorPanel />
          </div>
        </div>
      </div>

      <div className='h-[59px] flex items-center border-t border-[#d4d4d4] pl-1'>
        <div className='w-[1082px] h-7 border-l border-[#8a8a8a]' />
        <div className='w-px h-7 bg-[#8a8a8a]' />
      </div>
      <div className='h-[55px] flex items-center border-b border-[#d0d0d0]'>
        <div className='w-[3px] shrink-0 flex justify-end'><div className='w-px h-7 bg-[#8a8a8a]' /></div>
        <Toolbar items={bottomTools} />
      </div>
      <footer className='h-[37px] pl-0.5 flex items-center border-b-2 border-[#c4c4c4]'>
        <p className='grow pt-0.5 text-[22px] leading-7'>Ersten Eckpunkt der Aktivierungsfläche festlegen.</p>
        <button aria-label='Synchronisieren' className='mr-2'>
          <Icon box='0 0 28 26' className='w-7 h-[26px]'>
            <path d='M2 17V2h21v4M2 3h21' strokeWidth='2' />
            <path d='M17 24H8V9h13M8 10h12' strokeWidth='1.800' />
            <path d='M17 15c1-3 6-4 9-2M26 8v6h-5M27 20c-2 3-5 3-8 2M19 26v-5h4' stroke={BLUE} />
          </Icon>
        </button>
        <a href='#id' className='w-[218px] h-[34px] flex items-center justify-center border-x border-[#d0d0d0] font-["Lato",sans-serif] text-[22px] text-[#9a9a9a]'>
          GRAPHISOFT&nbsp;<span className='font-light'>ID</span>
        </a>
        <div className='w-[38px]' />
      </footer>

      <Brand />
    </div>
  )
}
